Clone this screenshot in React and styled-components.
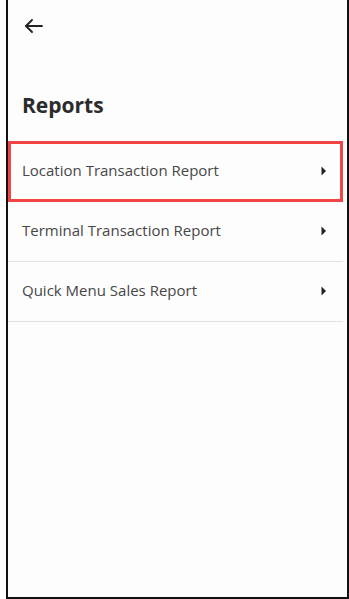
import React from 'react'
import styled, {createGlobalStyle} from 'styled-components'

const GlobalStyle = createGlobalStyle`
  html, body {
    margin: 0;
    padding: 0;
    background: #ffffff;
  }
  body {
    font-family: "Open Sans", "Noto Sans", Arial, sans-serif;
  }
`;

const reports = [
  {label: 'Location Transaction Report', active: true},
  {label: 'Terminal Transaction Report'},
  {label: 'Quick Menu Sales Report'},
];

export default function App() {
  return (
    <>
      <GlobalStyle />
      <Frame>
        <TopBar>
          <BackButton aria-label="Back">
            <svg width="20" height="16" viewBox="0 0 20 16" fill="none">
              <path d="M18 8H2" stroke="#222" strokeWidth="1.9" strokeLinecap="round" />
              <path d="M8 2L2 8L8 14" stroke="#222" strokeWidth="1.9" strokeLinecap="round" strokeLinejoin="round" />
            </svg>
          </BackButton>
        </TopBar>
        <Title>Reports</Title>
        <List>
          {reports.map((r) => (
            <Row key={r.label} $active={r.active}>
              <RowLabel>{r.label}</RowLabel>
              <svg width="10" height="12" viewBox="0 0 10 12">
                <path d="M2.5 1.5L7 6L2.5 10.5Z" fill="#222" />
              </svg>
            </Row>
          ))}
        </List>
      </Frame>
    </>
  )
}

const Frame = styled.div`
  box-sizing: border-box;
  margin-left: 6px;
  width: 343px;
  height: 599px;
  border-left: 2px solid #111;
  border-right: 2px solid #111;
  border-bottom: 2px solid #111;
  background: #fdfdfd;
  padding-right: 4px;
  display: flex;
  flex-direction: column;
`;

const TopBar = styled.div`
  height: 52px;
  display: flex;
  align-items: center;
  padding-left: 15px;
`;

const BackButton = styled.button`
  border: none;
  background: transparent;
  padding: 0;
  width: 22px;
  height: 22px;
  display: flex;
  align-items: center;
  justify-content: center;
  cursor: pointer;
`;

const Title = styled.h1`
  margin: 40px 0 0 14px;
  font-size: 21px;
  font-weight: 700;
  color: #2b2b2b;
  line-height: 26px;
`;

const List = styled.div`
  margin-top: 23px;
  display: flex;
  flex-direction: column;
`;

const Row = styled.div`
  box-sizing: border-box;
  display: flex;
  align-items: center;
  justify-content: space-between;
  ${(p) => p.$active ? `
    height: 61px;
    padding: 0 11px 2px 11px;
    border: 3px solid #f24444;
  ` : `
    height: 60px;
    padding: 0 14px 2px 14px;
    border-bottom: 1px solid #e2e2e2;
  `}
`;

const RowLabel = styled.span`
  font-size: 15px;
  color: #474747;
  margin-bottom: 2px;
`;
